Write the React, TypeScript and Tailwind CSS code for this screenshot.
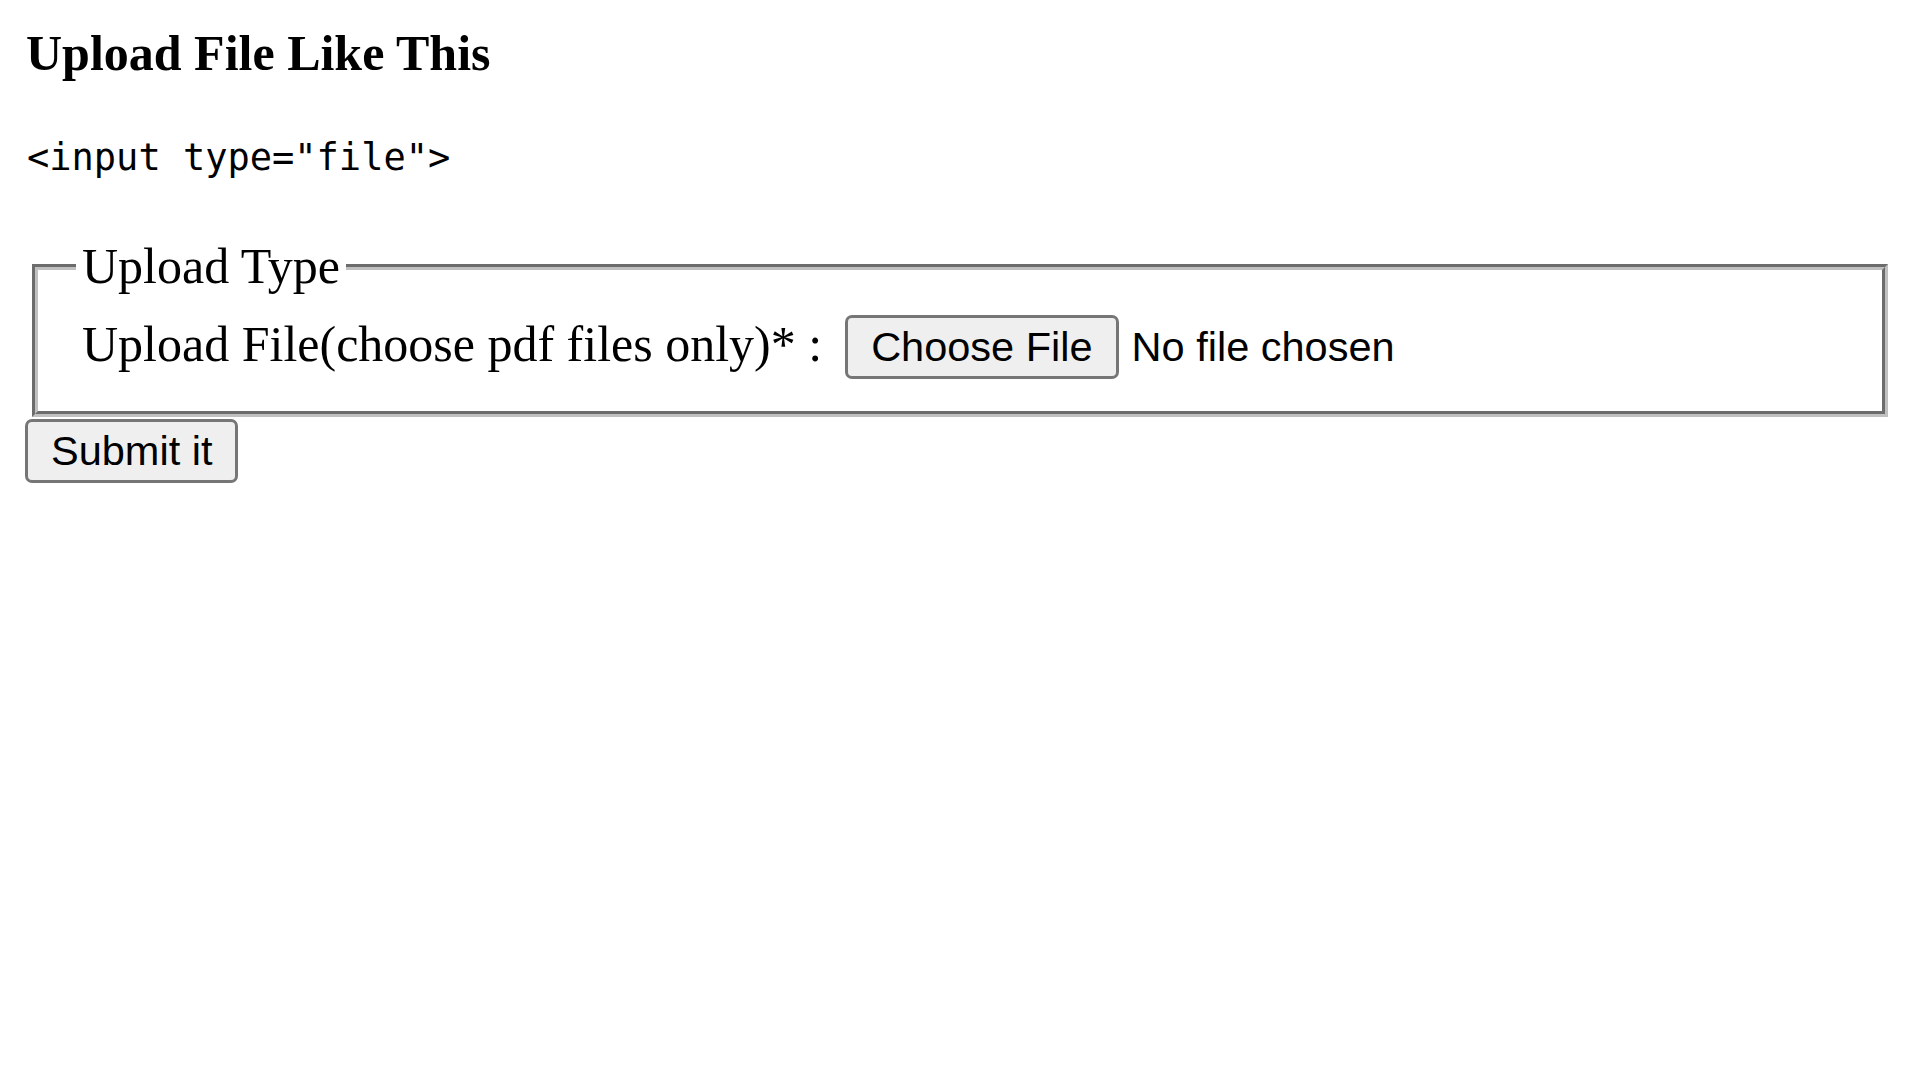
import { useState } from "react";

export default function App() {
  const [fileName, setFileName] = useState<string | null>(null);

  return (
    <div className="min-h-screen bg-white px-[25px] pt-[26px] text-black font-['Liberation_Serif',serif]">
      <h4 className="ml-[1px] text-[50px] font-bold leading-[55px]">Upload File Like This</h4>

      <p className="mt-[56px] ml-[2px] font-['DejaVu_Sans_Mono',monospace] text-[37px] leading-[42px]">
        {'<input type="file">'}
      </p>

      <form onSubmit={(e) => e.preventDefault()}>
        <fieldset className="mt-[60px] ml-[7px] mr-[7px] border-[6px] border-[#c0c0c0] [border-style:groove] pl-[38px] pr-[38px] pt-[21px] pb-[32px]">
          <legend className="px-[6px] text-[50px] leading-[55px]">Upload Type</legend>

          <label className="flex items-baseline pl-[6px]">
            <span className="text-[50px] leading-[55px] whitespace-nowrap">
              Upload File(choose pdf files only)* :
            </span>
            <span className="ml-[23px] flex h-[64px] items-center rounded-[7px] border-[3px] border-[#767676] bg-[#efefef] px-[23px] font-['Liberation_Sans',Arial,sans-serif] text-[41.5px] leading-none">
              Choose File
            </span>
            <span className="ml-[13px] font-['Liberation_Sans',Arial,sans-serif] text-[41.5px] whitespace-nowrap">
              {fileName ?? "No file chosen"}
            </span>
            <input
              type="file"
              accept="application/pdf"
              className="hidden"
              onChange={(e) => setFileName(e.target.files?.[0]?.name ?? null)}
            />
          </label>
        </fieldset>

        <button
          type="submit"
          className="mt-[2px] h-[64px] rounded-[7px] border-[3px] border-[#767676] bg-[#efefef] px-[23px] font-['Liberation_Sans',Arial,sans-serif] text-[41.5px] leading-none"
        >
          Submit it
        </button>
      </form>
    </div>
  );
}
